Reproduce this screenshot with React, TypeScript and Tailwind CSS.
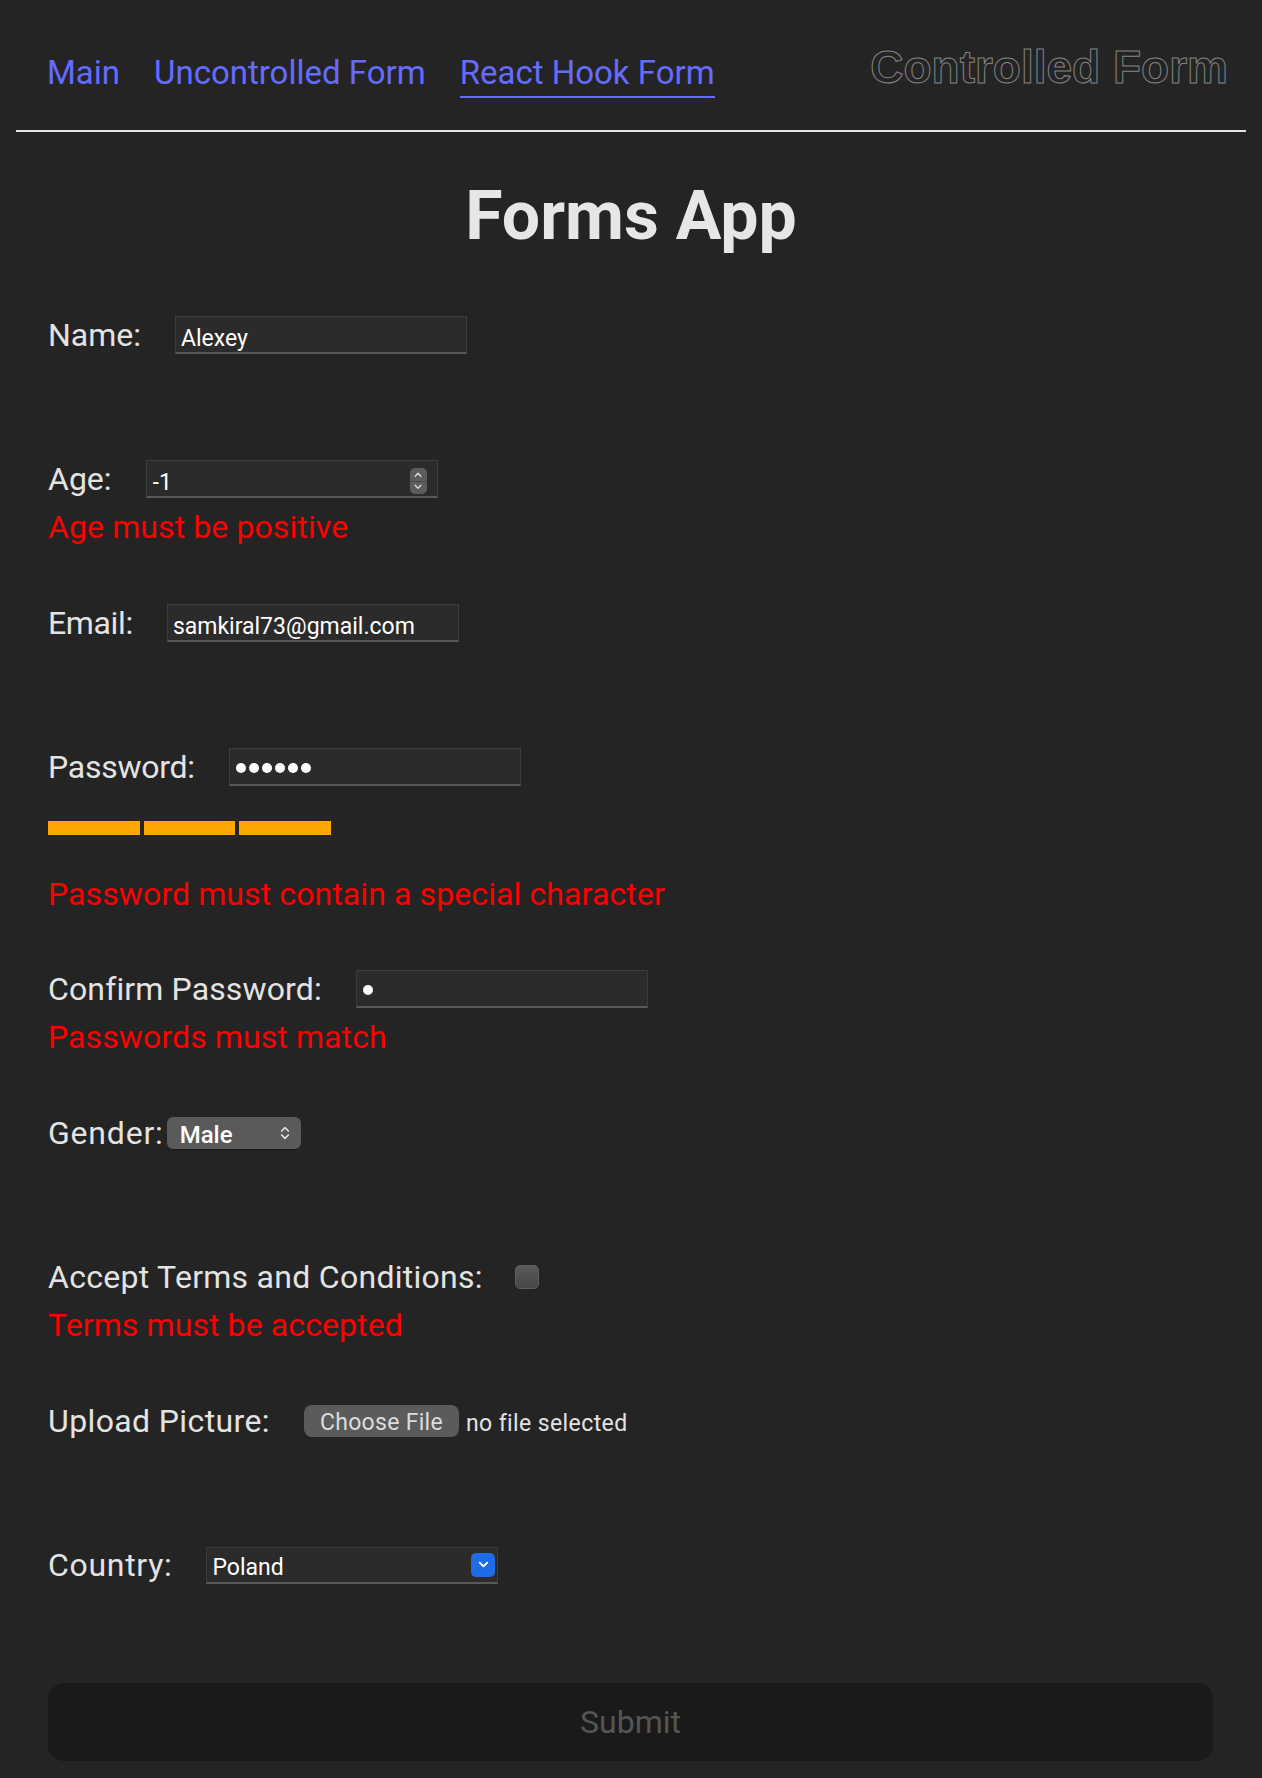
import React from "react";
import { ChevronsUpDown, ChevronDown, ChevronUp } from "lucide-react";

const inputCls =
  "h-[38px] w-[292px] bg-[#2b2b2b] border border-[#3c3c3c] border-b-[#585858] border-b-2 pl-[5px] pt-[7px] pb-0 text-[23px] text-white outline-none font-['Roboto',sans-serif]";

function Row({
  label,
  children,
  gap = "ml-[34px]",
  track = "tracking-normal",
}: {
  label: string;
  children?: React.ReactNode;
  gap?: string;
  track?: string;
}) {
  return (
    <div className="flex h-[40px] items-center">
      <span className={"text-[32px] leading-[40px] text-[#e3e3e3] " + track}>{label}</span>
      <div className={gap + " flex items-center"}>{children}</div>
    </div>
  );
}

function Err({ text }: { text?: string }) {
  return (
    <div className="mt-[8px] h-[40px] text-[32px] leading-[40px] tracking-[0.1px] text-[#ff0000]">{text ?? ""}</div>
  );
}

function PasswordBox({ count, label }: { count: number; label: string }) {
  return (
    <div
      role="textbox"
      aria-label={label}
      className="flex h-[38px] w-[292px] items-center gap-[3px] border border-b-2 border-[#3c3c3c] border-b-[#585858] bg-[#2b2b2b] pl-[6px] pt-[3px]"
    >
      {Array.from({ length: count }).map((_, i) => (
        <span key={i} className="h-[10px] w-[10px] rounded-full bg-white" />
      ))}
    </div>
  );
}

export default function App() {
  return (
    <div className="min-h-[1778px] w-full bg-[#242424] font-['Roboto',sans-serif] text-[#e3e3e3]">
      <div className="px-4">
        <div className="flex h-[130px] items-start justify-between">
          <nav className="ml-[31px] flex gap-[34px] pt-[53px]">
            <a className="border-b-2 border-transparent pb-[3px] text-[33px] leading-[40px] text-[#646cff]">Main</a>
            <a className="border-b-2 border-transparent pb-[3px] text-[33px] leading-[40px] text-[#646cff]">Uncontrolled Form</a>
            <a className="border-b-2 border-[#646cff] pb-[3px] text-[33px] leading-[40px] text-[#646cff]">React Hook Form</a>
          </nav>
          <div className="mr-[18px] pt-[44px] font-['Liberation_Sans',Arial,sans-serif] text-[46px] font-bold leading-[46px] text-transparent [-webkit-text-stroke:1px_#858585]">
            Controlled Form
          </div>
        </div>
        <div className="h-[2px] bg-[#e2e2e2]" />
      </div>

      <h1 className="mt-[50px] text-center text-[68px] font-bold leading-[68px] text-[#e6e6e6]">Forms App</h1>

      <form className="mt-[65px] pl-[48px]" onSubmit={(e) => e.preventDefault()}>
        <div className="h-[144px]">
          <Row label="Name:">
            <input className={inputCls} readOnly defaultValue="Alexey" />
          </Row>
        </div>

        <div className="h-[144px]">
          <Row label="Age:">
            <div className="relative">
              <input className={inputCls + " pl-[6px]"} readOnly defaultValue="-1" />
              <div className="absolute right-[11px] top-[8px] flex h-[26px] w-[17px] flex-col items-center justify-between rounded-[5px] bg-[#5c5c5c] py-[1px]">
                <ChevronUp size={12} strokeWidth={3} className="text-[#d8d8d8]" />
                <div className="h-px w-full bg-[#4a4a4a]" />
                <ChevronDown size={12} strokeWidth={3} className="text-[#d8d8d8]" />
              </div>
            </div>
          </Row>
          <Err text="Age must be positive" />
        </div>

        <div className="h-[144px]">
          <Row label="Email:" track="tracking-[-0.35px]">
            <input className={inputCls} readOnly defaultValue="samkiral73@gmail.com" />
          </Row>
        </div>

        <div className="h-[222px]">
          <Row label="Password:" track="tracking-[-0.25px]">
            <PasswordBox count={6} label="Password" />
          </Row>
          <div className="mt-[34px] flex gap-[4px]">
            <div className="h-[14px] w-[92px] bg-[#ffa500]" />
            <div className="h-[14px] w-[91px] bg-[#ffa500]" />
            <div className="h-[14px] w-[92px] bg-[#ffa500]" />
          </div>
          <div className="mt-[39px] h-[40px] text-[32px] leading-[40px] tracking-[0.1px] text-[#ff0000]">
            Password must contain a special character
          </div>
        </div>

        <div className="h-[144px]">
          <Row label="Confirm Password:" track="tracking-[0.13px]">
            <PasswordBox count={1} label="Confirm Password" />
          </Row>
          <Err text="Passwords must match" />
        </div>

        <div className="h-[144px]">
          <Row label="Gender:" gap="ml-[3px]" track="tracking-[0.8px]">
            <div className="flex h-[32px] w-[134px] items-center justify-between rounded-[6px] bg-[#5a5a5a] pl-[13px] pr-[8px] shadow-[0_1px_1px_rgba(0,0,0,0.3)]">
              <span className="pt-[3px] text-[24px] font-medium leading-none text-white">Male</span>
              <ChevronsUpDown size={16} strokeWidth={2.5} className="text-[#e0e0e0]" />
            </div>
          </Row>
        </div>

        <div className="h-[144px]">
          <Row label="Accept Terms and Conditions:" gap="ml-[32px]" track="tracking-[0.28px]">
            <div className="h-[24px] w-[24px] rounded-[5px] border border-[#5e5e5e] bg-gradient-to-b from-[#5a5a5a] to-[#464646]" />
          </Row>
          <Err text="Terms must be accepted" />
        </div>

        <div className="h-[144px]">
          <Row label="Upload Picture:" track="tracking-[0.38px]">
            <button type="button" className="flex h-[32px] w-[155px] items-center justify-center rounded-[8px] bg-[#5b5b5b] pt-[2px] text-[23px] leading-none tracking-[0.3px] text-[#dcdcdc]">
              Choose File
            </button>
            <span className="ml-[7px] pt-[4px] text-[23px] leading-none tracking-[0.4px] text-[#e3e3e3]">no file selected</span>
          </Row>
        </div>

        <div className="h-[138px]">
          <Row label="Country:" track="tracking-[0.7px]">
            <div className="flex h-[37px] w-[292px] items-center justify-between border border-b-2 border-[#3c3c3c] border-b-[#585858] bg-[#2b2b2b] pl-[5px] pr-[2px]">
              <span className="pt-[5px] text-[23px] leading-none text-white">Poland</span>
              <div className="flex h-[24px] w-[24px] items-center justify-center rounded-[5px] bg-[#1f6de6]">
                <ChevronDown size={15} strokeWidth={3} className="text-white" />
              </div>
            </div>
          </Row>
        </div>

        <div className="pr-[49px]">
          <button type="submit" disabled className="h-[78px] w-full rounded-[16px] bg-[#1a1a1a] text-[32px] text-[#555555]">
            Submit
          </button>
        </div>
      </form>
    </div>
  );
}
